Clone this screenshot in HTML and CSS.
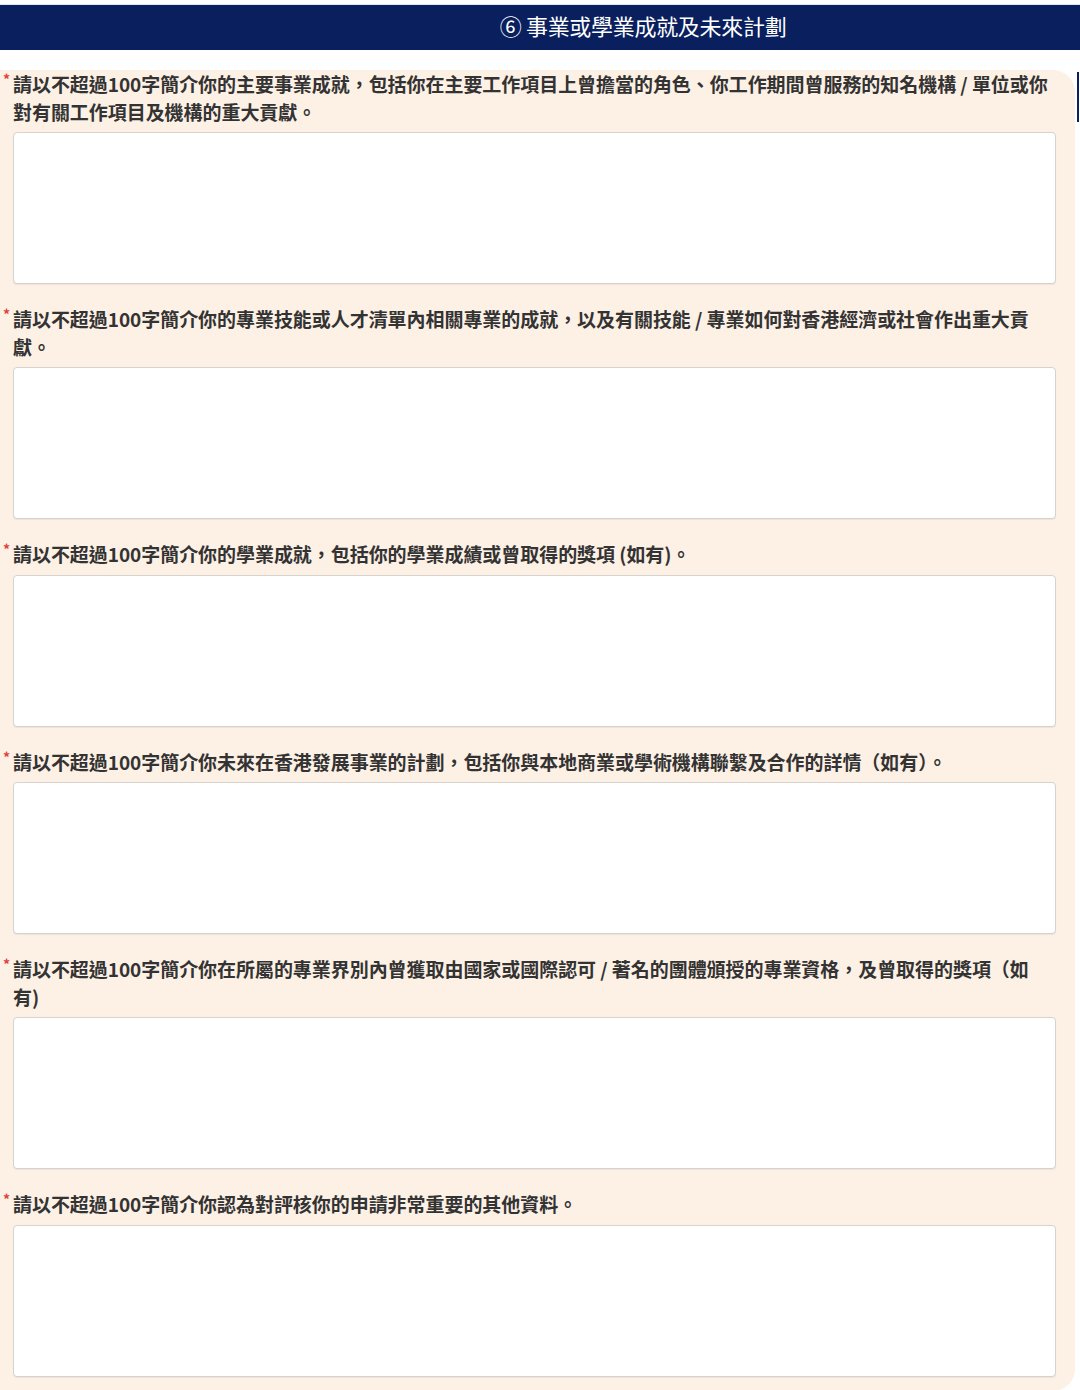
FILE: index.html
```html
<!DOCTYPE html>
<html lang="zh-Hant">
<head>
<meta charset="utf-8">
<title>事業或學業成就及未來計劃</title>
<link rel="stylesheet" href="styles.css">
</head>
<body>
<div class="page">
  <div class="top-gap"></div>
  <header class="section-bar">
    <h1 class="section-title">⑥ 事業或學業成就及未來計劃</h1>
  </header>
  <div class="spacer"></div>
  <div class="content-row">
    <main class="panel">
      <div class="field">
        <label class="label"><span class="req">*</span>請以不超過100字簡介你的主要事業成就，包括你在主要工作項目上曾擔當的角色、你工作期間曾服務的知名機構 / 單位或你<br>對有關工作項目及機構的重大貢獻。</label>
        <textarea class="box"></textarea>
      </div>
      <div class="field">
        <label class="label"><span class="req">*</span>請以不超過100字簡介你的專業技能或人才清單內相關專業的成就，以及有關技能 / 專業如何對香港經濟或社會作出重大貢<br>獻。</label>
        <textarea class="box"></textarea>
      </div>
      <div class="field">
        <label class="label"><span class="req">*</span>請以不超過100字簡介你的學業成就，包括你的學業成績或曾取得的獎項 (如有)。</label>
        <textarea class="box"></textarea>
      </div>
      <div class="field">
        <label class="label"><span class="req">*</span>請以不超過100字簡介你未來在香港發展事業的計劃，包括你與本地商業或學術機構聯繫及合作的詳情（如有）。</label>
        <textarea class="box"></textarea>
      </div>
      <div class="field">
        <label class="label"><span class="req">*</span>請以不超過100字簡介你在所屬的專業界別內曾獲取由國家或國際認可 / 著名的團體頒授的專業資格，及曾取得的獎項（如<br>有)</label>
        <textarea class="box"></textarea>
      </div>
      <div class="field">
        <label class="label"><span class="req">*</span>請以不超過100字簡介你認為對評核你的申請非常重要的其他資料。</label>
        <textarea class="box"></textarea>
      </div>
    </main>
    <aside class="sliver"><div class="sliver-mark"></div></aside>
  </div>
</div>
</body>
</html>
```

FILE: styles.css
```css
html, body {
  margin: 0;
  padding: 0;
  background: #ffffff;
}

.page {
  width: 1080px;
  font-family: "Noto Sans CJK JP", "Noto Sans CJK TC", "Noto Sans", sans-serif;
}

.top-gap {
  height: 5px;
  background: #ffffff;
  border-bottom: 1px solid #dfe6ee;
  box-sizing: border-box;
}

.section-bar {
  height: 45px;
  background: #0a1f5e;
  display: flex;
  align-items: center;
  justify-content: center;
  padding-left: 206px;
  padding-bottom: 5px;
  box-sizing: border-box;
}

.section-title {
  margin: 0;
  color: #ffffff;
  font-size: 22px;
  font-weight: 400;
  line-height: 1;
  letter-spacing: -0.3px;
}

.spacer {
  height: 20px;
}

.content-row {
  display: flex;
}

.panel {
  width: 1075px;
  background: #fdf0e5;
  border-top-right-radius: 22px;
  border-bottom-right-radius: 22px;
  padding: 0 19px 14px 13px;
  box-sizing: border-box;
}

.sliver {
  width: 5px;
  padding-top: 2px;
}

.sliver-mark {
  width: 2px;
  height: 50px;
  margin-left: 2px;
  background: #0a1f5e;
}

.field {
  display: flex;
  flex-direction: column;
  margin-bottom: 21px;
}

.field:last-child {
  margin-bottom: 0;
}

.label {
  position: relative;
  display: block;
  font-size: 19px;
  font-weight: 700;
  line-height: 27.5px;
  color: #333333;
  white-space: nowrap;
  letter-spacing: -0.05px;
  margin-bottom: 7px;
}

.req {
  position: absolute;
  left: -10px;
  top: -4px;
  color: #e0403c;
  font-size: 14px;
  font-weight: 700;
}

.box {
  display: block;
  width: 1043px;
  height: 152px;
  box-sizing: border-box;
  background: #ffffff;
  border: 1px solid #d6d2ce;
  border-radius: 4px;
  box-shadow: 0 1px 1px rgba(0,0,0,0.06);
  resize: none;
  margin: 0;
  padding: 6px;
  font-family: inherit;
}
```
